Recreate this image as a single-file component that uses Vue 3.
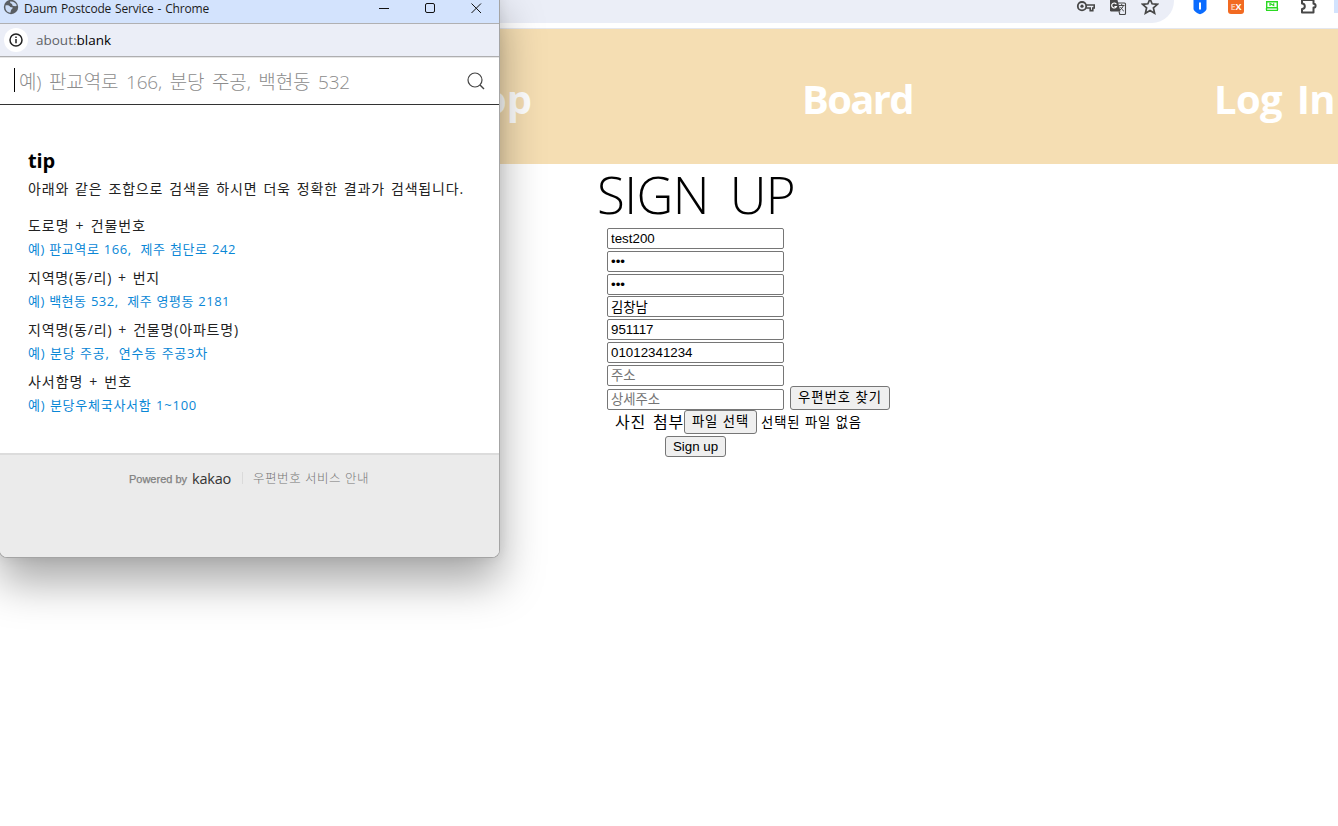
<script setup>
import { ref } from 'vue'

// Spreads the letters of a label so that it takes the given width.
const vFit = {
  mounted(el, { value }) {
    const count = Array.from(el.textContent.trim()).length
    const natural = el.getBoundingClientRect().width
    el.style.letterSpacing = `${(value - natural) / count}px`
  }
}

const tips = [
  { label: '도로명 + 건물번호', width: 118, example: '예) 판교역로 166,\u00a0 제주 첨단로 242', exampleWidth: 208 },
  { label: '지역명(동/리) + 번지', width: 132, example: '예) 백현동 532,\u00a0 제주 영평동 2181', exampleWidth: 202 },
  { label: '지역명(동/리) + 건물명(아파트명)', width: 211, example: '예) 분당 주공,\u00a0 연수동 주공3차', exampleWidth: 180 },
  { label: '사서함명 + 번호', width: 104, example: '예) 분당우체국사서함 1~100', exampleWidth: 169 }
]

const form = ref({
  id: 'test200',
  password: '123',
  confirm: '123',
  name: '김창남',
  birth: '951117',
  phone: '01012341234',
  address: '',
  detail: ''
})
</script>

<template>
  <div class="screen">
    <div class="toolbar">
      <div class="omnibox">
        <svg class="key" width="20" height="14" viewBox="0 0 20 14" fill="none" stroke="#474747">
          <circle cx="6" cy="6.2" r="4.2" stroke-width="1.8" />
          <circle cx="6" cy="6.2" r="1.6" fill="#474747" stroke="none" />
          <path d="M10.2 5h8v3h-1.4v2.6h-2.6V8h-4" stroke-width="1.6" />
        </svg>
        <svg class="translate" width="18" height="16" viewBox="0 0 18 16">
          <path d="M1 0h7.5l3 11.5H2.2A1.2 1.2 0 0 1 1 10.300z" fill="#474747" />
          <path d="M8.800 3h6.700a1 1 0 0 1 1 1v9.500a1 1 0 0 1-1 1h-4.700l-.8-3" fill="none" stroke="#474747" stroke-width="1.100" />
          <path d="M7.400 4.300A2.500 2.500 0 1 0 7.500 6.500H5.400" fill="none" stroke="#fff" stroke-width="1.200" />
          <path d="M10 5.500h5.500M12.700 4v1.500M14.300 5.500c-.5 2-2 3.500-3.200 4.300M11.500 7c.8 1.800 2 3.200 3.400 4.200" fill="none" stroke="#474747" />
        </svg>
        <svg class="star" width="18" height="16" viewBox="0 0 18 16">
          <path d="M9-1.200l2.100 5 5.400.5-4.100 3.600 1.200 5.300L9 10.400l-4.600 2.800 1.200-5.300-4.100-3.600 5.400-.5z" fill="none" stroke="#474747" stroke-width="1.700" />
        </svg>
      </div>
      <div class="extensions">
        <svg class="shield" width="14" height="16" viewBox="0 0 14 16">
          <path d="M.5 0h13v8.500c0 2.500-3 4.500-6.500 5.700C3.500 13 .5 11 .5 8.500z" fill="#0a6cff" />
          <path d="M7 2.500v7" stroke="#fff" stroke-width="2" />
        </svg>
        <div class="ex"><span>E</span>X</div>
        <svg class="monitor" width="14" height="16" viewBox="0 0 14 16" fill="none" stroke="#2bd922">
          <path d="M1.700 1.700h10.600v6H1.700zM1 10.400h12M1.500 8v2M12.500 8v2" stroke-width="1.400" />
          <path d="M5 6V3.500l3.700 2V3.200" stroke-width="1.200" />
        </svg>
        <svg class="puzzle" width="18" height="16" viewBox="0 0 18 16">
          <path d="M2 0h11.500v3.800c1.300 0 2.100.8 2.100 1.900s-.8 1.900-2.100 1.900V12.500H2V9c1.800 0 2.800-1.300 2.800-2.800S3.800 3.400 2 3.400z" fill="none" stroke="#474747" stroke-width="2" stroke-linejoin="round" />
        </svg>
        <i class="edge"></i>
      </div>
    </div>

    <nav class="nav">
      <a v-fit="98" class="shop">Shop</a>
      <a v-fit="111" class="board">Board</a>
      <a v-fit="121" class="login">Log In</a>
    </nav>

    <form class="signup" @submit.prevent>
      <h1><span v-fit="198">SIGN UP</span></h1>
      <input v-model="form.id" type="text" />
      <input v-model="form.password" type="password" />
      <input v-model="form.confirm" type="password" />
      <input v-model="form.name" class="tight" type="text" />
      <input v-model="form.birth" type="text" />
      <input v-model="form.phone" type="text" />
      <input v-model="form.address" type="text" placeholder="주소" />
      <div class="detail">
        <input v-model="form.detail" type="text" placeholder="상세주소" />
        <button type="button"><span v-fit="84">우편번호 찾기</span></button>
      </div>
      <div class="file">
        <label v-fit="69">사진 첨부</label>
        <button type="button"><span v-fit="57">파일 선택</span></button>
        <span v-fit="101" class="nofile">선택된 파일 없음</span>
      </div>
      <button class="submit" type="submit">Sign up</button>
    </form>

    <section class="popup">
      <header class="titlebar">
        <svg width="16" height="16" viewBox="0 0 16 16">
          <circle cx="8" cy="7" r="7.200" fill="#5a5e63" />
          <path d="M2.500 5.500c2.500-.5 4 .2 4.800 1.500l2.500.6c-.3 1.500-1.400 1.600-1.800 2.600l-.6 2.600C4 12.500 1.800 9.500 2.500 5.500zM7 1.600c0 1.600.8 2 2 2.300l.6 1.900 2.800.5 1.500-.8C13.200 3.200 10.500 1.200 7 1.600z" fill="#cbdcf7" />
        </svg>
        <span v-fit="185" class="title">Daum Postcode Service - Chrome</span>
        <svg class="controls" width="110" height="18" viewBox="0 0 110 18" fill="none" stroke="#111">
          <path d="M4 8.500h10M96.500 3.500l9.500 9.500M106 3.500L96.500 13" />
          <rect x="50.500" y="3.500" width="9" height="9" rx="1.500" />
        </svg>
      </header>
      <div class="address">
        <span class="info">
          <svg width="14" height="14" viewBox="0 0 14 14" fill="none" stroke="#222">
            <circle cx="7" cy="7" r="6" stroke-width="1.500" />
            <path d="M7 6v4.200M7 3.500v1.400" stroke-width="1.500" />
          </svg>
        </span>
        <span v-fit="75" class="url"><span class="scheme">about:</span>blank</span>
      </div>
      <div class="search">
        <i class="caret"></i>
        <span v-fit="331" class="placeholder">예) 판교역로 166, 분당 주공, 백현동 532</span>
        <svg width="18" height="18" viewBox="0 0 18 18" fill="none" stroke="#444">
          <circle cx="8" cy="8" r="7" stroke-width="1.200" />
          <path d="M13 13l4 4" stroke-width="1.500" />
        </svg>
      </div>
      <div class="tips">
        <h2><span v-fit="27">tip</span></h2>
        <p class="lead"><span v-fit="436">아래와 같은 조합으로 검색을 하시면 더욱 정확한 결과가 검색됩니다.</span></p>
        <dl>
          <template v-for="tip in tips" :key="tip.label">
            <dt><span v-fit="tip.width">{{ tip.label }}</span></dt>
            <dd><span v-fit="tip.exampleWidth">{{ tip.example }}</span></dd>
          </template>
        </dl>
      </div>
      <footer>
        <span v-fit="58" class="powered">Powered by</span>
        <span v-fit="39" class="kakao">kakao</span>
        <i class="divider"></i>
        <span v-fit="116" class="guide">우편번호 서비스 안내</span>
      </footer>
    </section>
  </div>
</template>

<style>
body {
  margin: 0;
  overflow: hidden;
}
</style>

<style scoped>
.screen {
  position: relative;
  width: 1338px;
  height: 826px;
  overflow: hidden;
  background: #fff;
  color: #000;
  font-family: "Open Sans", "Noto Sans CJK KR", sans-serif;
  white-space: nowrap;
}
.screen span,
.screen a,
.screen label {
  display: inline-block;
}
svg,
i {
  display: block;
  flex: none;
}
.toolbar {
  display: flex;
  height: 28px;
  border-bottom: 1px solid #e4e7ee;
}
.omnibox {
  box-sizing: border-box;
  display: flex;
  width: 1174px;
  height: 23px;
  padding-left: 1076px;
  background: #ebeef7;
  border-bottom-right-radius: 22px;
}
.translate {
  margin-left: 13px;
}
.star {
  margin-left: 14px;
}
.extensions {
  display: flex;
  flex: 1;
  padding-left: 19px;
}
.ex {
  width: 16px;
  height: 14px;
  margin-left: 21px;
  background: #f26a21;
  border-radius: 0 0 3px 3px;
  color: #fff;
  font: bold 9px/13px "Open Sans", sans-serif;
  text-align: center;
}
.ex span {
  opacity: .6;
}
.monitor {
  margin-left: 21px;
}
.puzzle {
  margin-left: 21px;
}
.edge {
  width: 4px;
  height: 13px;
  margin-left: auto;
  background: #d3e3fd;
}
.nav {
  display: flex;
  height: 135px;
  background: #f5deb3;
  color: #fff;
  font-size: 40px;
  font-weight: 700;
  line-height: 139px;
  word-spacing: 5px;
}
.shop {
  margin-left: 434px;
}
.board {
  margin-left: 270px;
}
.login {
  margin-left: 301px;
}
.signup {
  display: flex;
  flex-direction: column;
  align-items: flex-start;
  padding-left: 607px;
}
h1 {
  height: 64px;
  margin: 0 0 0 -10px;
  font-size: 51px;
  font-weight: 350;
  line-height: 61px;
  word-spacing: 8px;
}
input {
  box-sizing: border-box;
  flex: none;
  width: 177px;
  height: 21px;
  margin: 0 0 2px;
  padding: 1px 3px;
  border: 1px solid #767676;
  border-radius: 2px;
  outline: 0;
  background: #fff;
  color: #000;
  font: 13.333px "Liberation Sans", "Noto Sans CJK KR", sans-serif;
}
input.tight {
  margin-top: -1px;
}
input::placeholder {
  color: #757575;
}
button {
  box-sizing: border-box;
  height: 24px;
  padding: 0;
  border: 1px solid #767676;
  border-radius: 3px;
  background: #efefef;
  color: #000;
  font: 13.333px "Liberation Sans", "Noto Sans CJK KR", sans-serif;
  line-height: 22px;
}
.detail,
.file {
  display: flex;
}
.detail {
  height: 24px;
  margin-top: -2px;
}
.detail input {
  margin-top: 3px;
}
.detail button {
  width: 100px;
  margin-left: 6px;
}
.file {
  height: 24px;
  margin-left: 8px;
  line-height: 24px;
}
.file label {
  font-size: 16px;
  word-spacing: 2px;
}
.file button {
  width: 73px;
}
.nofile {
  margin-left: 4px;
  font-size: 13.333px;
}
.submit {
  width: 61px;
  height: 21px;
  margin: 2px 0 0 58px;
  line-height: 19px;
}
.popup {
  position: absolute;
  top: -10px;
  left: -1px;
  box-sizing: border-box;
  display: flex;
  flex-direction: column;
  width: 501px;
  height: 568px;
  padding-top: 10px;
  overflow: hidden;
  border: 1px solid #a4a4a4;
  border-top: 0;
  border-radius: 8px;
  background: #fff;
  box-shadow: 0 24px 44px rgba(0, 0, 0, .34), 0 0 12px rgba(0, 0, 0, .08);
}
.titlebar {
  box-sizing: border-box;
  display: flex;
  height: 24px;
  padding-left: 3px;
  border-bottom: 1px solid #b0b0b2;
  background: #d3e3fd;
}
.title {
  margin-left: 5px;
  color: #1c1c1c;
  font-size: 12px;
  line-height: 18px;
  word-spacing: 1px;
}
.controls {
  margin: 0 14px 0 auto;
}
.address {
  box-sizing: border-box;
  display: flex;
  align-items: center;
  height: 33px;
  padding-left: 4px;
  border-bottom: 1px solid #aeaeb0;
  background: #ebeef7;
}
.address .info {
  display: flex;
  align-items: center;
  justify-content: center;
  width: 24px;
  height: 24px;
  border-radius: 50%;
  background: #fff;
}
.url {
  margin-left: 8px;
  font-size: 13.500px;
}
.url .scheme {
  color: #5f6368;
}
.search {
  box-sizing: border-box;
  display: flex;
  align-items: center;
  height: 48px;
  padding: 0 14px 0 14px;
  border-top: 1px solid #e6e6e6;
  border-bottom: 1px solid #333;
}
.caret {
  width: 1px;
  height: 24px;
  margin-top: -2px;
  background: #000;
}
.placeholder {
  margin-top: -1px;
  margin-left: 4px;
  color: #8c8c8c;
  font-size: 19px;
  font-weight: 300;
  word-spacing: 3px;
}
.search svg {
  margin-left: auto;
}
.tips {
  height: 348px;
  padding-left: 28px;
}
h2 {
  height: 29px;
  margin: 0;
  padding-top: 41px;
  font-size: 20px;
  font-weight: 700;
  line-height: 29px;
}
.lead {
  height: 28px;
  margin: 0;
  color: #222;
  font-size: 14px;
  line-height: 28px;
  word-spacing: 1.500px;
}
dl {
  margin: 10px 0 0;
}
dt,
dd {
  margin: 0;
  color: #222;
  font-size: 14px;
  line-height: 25px;
  word-spacing: 1.500px;
}
dt {
  height: 24px;
}
dd {
  height: 28px;
  color: #0a87d6;
  font-size: 13px;
  word-spacing: .5px;
}
footer {
  display: flex;
  flex: 1;
  padding: 0 0 0 129px;
  border-top: 2px solid #dcdcdc;
  background: #ebebeb;
  line-height: 47px;
}
.powered {
  color: #808080;
  font: 11px/49px "Liberation Sans", sans-serif;
  -webkit-text-stroke: .25px #808080;
}
.kakao {
  margin-left: 5px;
  color: #333;
  font-size: 14.500px;
}
.divider {
  width: 1px;
  height: 12px;
  margin: 17px 10px 0 11px;
  background: #dadada;
}
.guide {
  color: #777;
  font-size: 12.500px;
  font-weight: 300;
}
</style>
